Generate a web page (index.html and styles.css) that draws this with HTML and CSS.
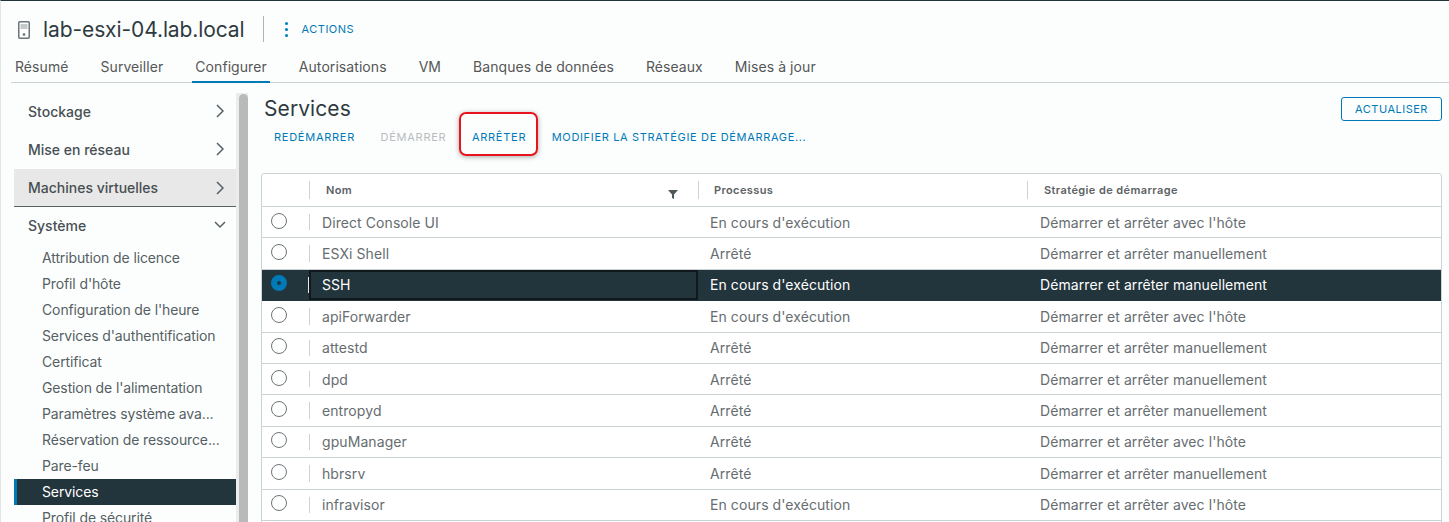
FILE: index.html
```html
<!DOCTYPE html>
<html lang="fr">
<head>
<meta charset="utf-8">
<title>Services</title>
<link rel="stylesheet" href="styles.css">
</head>
<body>
<div class="page">
  <header class="head">
    <svg class="host-icon" viewBox="0 0 12 18" width="12" height="18"><rect x="0.75" y="0.75" width="10.5" height="16.5" rx="1" fill="#fff" stroke="#6b7578" stroke-width="1.5"/><rect x="2.5" y="3" width="7" height="5" fill="#c3c8ca"/><circle cx="6" cy="13.5" r="1.3" fill="#5f6b70"/></svg>
    <h1 class="title">lab-esxi-04.lab.local</h1>
    <span class="head-sep"></span>
    <span class="dots"><i></i><i></i><i></i></span>
    <span class="actions">ACTIONS</span>
  </header>
  <nav class="tabs">
    <span class="tab">Résumé</span>
    <span class="tab">Surveiller</span>
    <span class="tab active">Configurer</span>
    <span class="tab">Autorisations</span>
    <span class="tab">VM</span>
    <span class="tab">Banques de données</span>
    <span class="tab">Réseaux</span>
    <span class="tab">Mises à jour</span>
  </nav>
  <div class="main">
    <aside class="side">
      <div class="side-list">
        <div class="group">Stockage<svg class="chev" viewBox="0 0 8 14" width="8" height="14"><path d="M1 1l6 6-6 6" fill="none" stroke="#565f63" stroke-width="1.5"/></svg></div>
        <div class="group">Mise en réseau<svg class="chev" viewBox="0 0 8 14" width="8" height="14"><path d="M1 1l6 6-6 6" fill="none" stroke="#565f63" stroke-width="1.5"/></svg></div>
        <div class="group hl">Machines virtuelles<svg class="chev" viewBox="0 0 8 14" width="8" height="14"><path d="M1 1l6 6-6 6" fill="none" stroke="#565f63" stroke-width="1.5"/></svg></div>
        <div class="group">Système<svg class="chev down" viewBox="0 0 12 8" width="12" height="8"><path d="M1 1l5 5 5-5" fill="none" stroke="#565f63" stroke-width="1.5"/></svg></div>
        <div class="sub">Attribution de licence</div>
        <div class="sub">Profil d'hôte</div>
        <div class="sub">Configuration de l'heure</div>
        <div class="sub">Services d'authentification</div>
        <div class="sub">Certificat</div>
        <div class="sub">Gestion de l'alimentation</div>
        <div class="sub">Paramètres système ava...</div>
        <div class="sub">Réservation de ressource...</div>
        <div class="sub">Pare-feu</div>
        <div class="sub current">Services</div>
        <div class="sub">Profil de sécurité</div>
      </div>
      <div class="scroll"><div class="thumb"></div></div>
    </aside>
    <section class="content">
      <div class="content-top">
        <h2 class="heading">Services</h2>
        <button class="refresh">ACTUALISER</button>
      </div>
      <div class="toolbar">
        <span class="act">REDÉMARRER</span>
        <span class="act off">DÉMARRER</span>
        <span class="act mark">ARRÊTER</span>
        <span class="act long">MODIFIER LA STRATÉGIE DE DÉMARRAGE...</span>
      </div>
      <div class="table">
        <div class="row hdr">
          <div class="c0"></div>
          <div class="c c1">Nom<svg class="filter" viewBox="0 0 10 10" width="10" height="10"><path d="M0 1h10L6 5.5V10L4 9V5.5z" fill="#4f585c"/></svg></div>
          <div class="c c2">Processus</div>
          <div class="c c3">Stratégie de démarrage</div>
        </div>
        <div class="row"><div class="c0"><span class="radio"></span></div><div class="c c1">Direct Console UI</div><div class="c c2">En cours d'exécution</div><div class="c c3">Démarrer et arrêter avec l'hôte</div></div>
        <div class="row"><div class="c0"><span class="radio"></span></div><div class="c c1">ESXi Shell</div><div class="c c2">Arrêté</div><div class="c c3">Démarrer et arrêter manuellement</div></div>
        <div class="row sel"><div class="c0"><span class="radio on"></span></div><div class="c c1">SSH</div><div class="c c2">En cours d'exécution</div><div class="c c3">Démarrer et arrêter manuellement</div></div>
        <div class="row"><div class="c0"><span class="radio"></span></div><div class="c c1">apiForwarder</div><div class="c c2">En cours d'exécution</div><div class="c c3">Démarrer et arrêter avec l'hôte</div></div>
        <div class="row"><div class="c0"><span class="radio"></span></div><div class="c c1">attestd</div><div class="c c2">Arrêté</div><div class="c c3">Démarrer et arrêter manuellement</div></div>
        <div class="row"><div class="c0"><span class="radio"></span></div><div class="c c1">dpd</div><div class="c c2">Arrêté</div><div class="c c3">Démarrer et arrêter manuellement</div></div>
        <div class="row"><div class="c0"><span class="radio"></span></div><div class="c c1">entropyd</div><div class="c c2">Arrêté</div><div class="c c3">Démarrer et arrêter manuellement</div></div>
        <div class="row"><div class="c0"><span class="radio"></span></div><div class="c c1">gpuManager</div><div class="c c2">Arrêté</div><div class="c c3">Démarrer et arrêter avec l'hôte</div></div>
        <div class="row"><div class="c0"><span class="radio"></span></div><div class="c c1">hbrsrv</div><div class="c c2">Arrêté</div><div class="c c3">Démarrer et arrêter manuellement</div></div>
        <div class="row"><div class="c0"><span class="radio"></span></div><div class="c c1">infravisor</div><div class="c c2">En cours d'exécution</div><div class="c c3">Démarrer et arrêter avec l'hôte</div></div>
        <div class="row tail"></div>
      </div>
    </section>
  </div>
</div>
</body>
</html>
```
FILE: styles.css
```css
* { box-sizing: border-box; }
html, body { margin: 0; padding: 0; height: 100%; overflow: hidden; background: #fcfefe; }
body { font-family: Inter, "Liberation Sans", sans-serif; color: #565656; font-size: 14px; letter-spacing: 0.08px; }
.page { position: relative; height: 522px; overflow: hidden; border-top: 1px solid #22343c; border-left: 1px solid #e4e4e4; display: flex; flex-direction: column; }
.page::before { content: ""; position: absolute; left: -1px; top: 330px; width: 1px; height: 25px; background: #a8a8a8; }

.head { height: 55px; display: flex; align-items: center; padding: 1px 0 0 17px; flex: none; }
.host-icon { flex: none; margin-right: 13px; margin-top: 2px; }
.title { margin: 0; font-size: 21px; font-weight: 400; color: #2f3a3f; letter-spacing: -0.1px; white-space: nowrap; }
.head-sep { width: 1px; height: 26px; background: #b3b3b3; margin: 0 18px 0 18px; }
.dots { display: flex; flex-direction: column; gap: 3px; margin: 0 14px 0 3px; }
.dots i { width: 3px; height: 3px; border-radius: 50%; background: #0079b8; }
.actions { font-size: 11px; letter-spacing: 0.5px; color: #0079b8; }

.tabs { height: 27px; margin-left: 10px; padding-left: 4px; display: flex; gap: 32px; border-bottom: 1px solid #ccd3d6; flex: none; }
.tab { height: 27px; padding-top: 2px; position: relative; font-size: 14px; letter-spacing: 0.07px; color: #565656; white-space: nowrap; }
.tab.active::after { content: ""; position: absolute; left: -3px; right: -3px; bottom: 0; height: 2px; background: #0079b8; }

.main { display: flex; flex: 1; min-height: 0; padding-left: 13px; padding-top: 10px; }
.side { display: flex; width: 235px; flex: none; }
.side-list { width: 222px; flex: none; }
.group { height: 38px; display: flex; align-items: center; justify-content: space-between; padding: 0 12px 2px 14px; font-size: 14px; font-weight: 500; letter-spacing: 0; color: #474f53; }
.group.hl { background: #e8e8e8; border-bottom: 1px solid #5a6266; padding-bottom: 0; }
.chev.down { margin-right: -2px; }
.sub { height: 26px; line-height: 26px; padding-left: 28px; font-size: 14px; letter-spacing: -0.12px; color: #565f63; white-space: nowrap; overflow: hidden; }
.sub.current { background: #22343c; color: #fff; border-left: 3px solid #0079b8; padding-left: 25px; }
.scroll { width: 12px; flex: none; background: #ececec; padding-left: 3px; }
.thumb { width: 9px; height: 430px; background: #b9b9b9; border-radius: 5px 5px 0 0; margin-top: 1px; }

.content { flex: 1; min-width: 0; padding: 0 7px 0 12px; }
.content-top { height: 32px; display: flex; justify-content: space-between; align-items: flex-start; padding-left: 3px; }
.heading { margin: 0; font-size: 21px; line-height: 32px; font-weight: 400; color: #2f3a3f; }
.refresh { margin-top: 4px; width: 101px; height: 24px; padding: 0; background: transparent; border: 1px solid #0079b8; border-radius: 3px; color: #0079b8; font: 11px Inter, sans-serif; letter-spacing: 0.5px; }
.toolbar { height: 24px; display: flex; align-items: center; padding-left: 13px; gap: 25.5px; margin-bottom: 24px; }
.act { position: relative; font-size: 11px; letter-spacing: 0.74px; color: #0079b8; white-space: nowrap; }
.act.long { letter-spacing: 0.66px; }
.act.off { color: #b9bcbe; }
.act.mark::before { content: ""; position: absolute; left: -13px; right: -12px; top: -18px; bottom: -12px; border: 2px solid #e8131b; border-radius: 7px; box-shadow: 0 1px 5px rgba(0,0,0,.35); }

.table { border: 1px solid #ccd3d6; border-radius: 3px 3px 0 0; background: #fff; }
.row { display: grid; grid-template-columns: 47px 389px 329px 1fr; height: 31.4px; border-bottom: 1px solid #ccd3d6; align-items: center; color: #666d70; }
.row.hdr { height: 33px; font-size: 11px; font-weight: 600; letter-spacing: 0.4px; color: #5c6265; }
.row.sel { background: #22343c; color: #fff; border-bottom-color: #22343c; }
.row.tail { border-bottom: 0; }
.c0 { padding-left: 9px; display: flex; align-items: center; height: 100%; }
.c { position: relative; padding-left: 13px; height: 100%; display: flex; align-items: center; white-space: nowrap; }
.c2 { padding-left: 12px; }
.hdr .c { padding-left: 17px; }
.hdr .c2 { padding-left: 16px; }
.c::before { content: ""; position: absolute; left: 0; top: 7px; bottom: 7px; width: 1px; background: #ccd3d6; }
.c2::before, .c3::before { display: none; }
.hdr .c2::before, .hdr .c3::before { display: block; }
.row.sel .c1 { outline: 2px solid #10181c; outline-offset: -2px; }
.row.sel .c1::before { background: #e8e8e8; left: -1px; }
.filter { position: absolute; right: 20px; top: 15px; }
.radio { width: 16px; height: 16px; border-radius: 50%; border: 1px solid #6c7478; background: #fff; margin-top: -3px; }
.radio.on { background: #22343c; border: 6px solid #0079b8; }
```
